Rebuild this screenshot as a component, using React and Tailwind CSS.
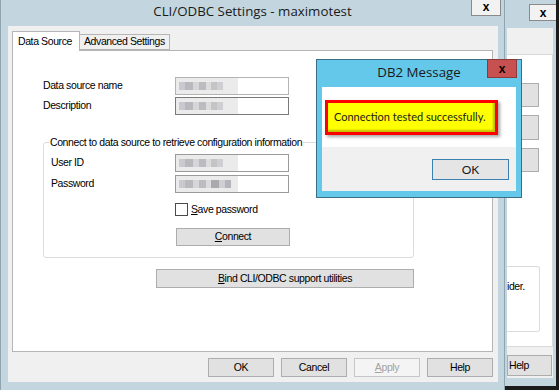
import React from "react";

const ui = { fontFamily: '"Liberation Sans", Arial, sans-serif', letterSpacing: "-0.4px" };
const seg = { fontFamily: '"Open Sans", "Noto Sans", sans-serif' };
const lato = { fontFamily: 'Lato, "Open Sans", sans-serif' };

function Blur({ dark }) {
  return (
    <div className="h-full w-[62px] bg-[#ebebeb] flex items-center pl-[3px] gap-0 blur-[0.6px]">
      <div className="h-[8px] w-[6px] bg-[#c9c9cf]" />
      <div className="h-[8px] w-[8px] bg-[#b9b9bd]" />
      <div className="h-[8px] w-[6px] bg-[#d6d6d8]" />
      <div className="h-[8px] w-[7px] bg-[#bcbcc0]" />
      <div className="h-[8px] w-[5px] bg-[#dcdcdc]" />
      <div className={dark ? "h-[8px] w-[8px] bg-[#a9a9b0]" : "h-[8px] w-[6px] bg-[#c4c4c4]"} />
      <div className="h-[8px] w-[6px] bg-[#cfcfd3]" />
      {dark && <div className="h-[8px] w-[6px] bg-[#b4b4ba]" />}
    </div>
  );
}

function TextBox({ border = "border-[#a8a8a8]", dark }) {
  return (
    <div className={`w-[114px] h-[18px] bg-white border ${border} flex items-stretch`}>
      <Blur dark={dark} />
    </div>
  );
}

function Btn({ children, className = "", disabled }) {
  return (
    <div
      className={`flex items-center justify-center whitespace-nowrap border ${
        disabled ? "border-[#c6c6c6] bg-[#f4f4f4] text-[#a3a3a3]" : "border-[#adadad] bg-[#e1e1e1] text-black"
      } text-[10.5px] ${className}`}
      style={ui}
    >
      {children}
    </div>
  );
}

const T = "text-[10.5px] text-black whitespace-nowrap";

export default function App() {
  return (
    <div className="relative w-[559px] h-[390px] overflow-hidden bg-[#1b1b1b]">
      {/* background window */}
      <div className="absolute left-[505px] top-0 w-[51px] h-[386px] bg-[#c3d6df] overflow-hidden flex flex-col">
        <div className="h-[28px] shrink-0 pt-[4px] pl-[24px]">
          <div className="w-[32px] h-[17px] bg-[#f2f2f2] border border-[#8a8a8a] flex items-center justify-center pr-[4px]">
            <span className="text-[12px] font-bold leading-none text-black" style={ui}>x</span>
          </div>
        </div>
        <div className="ml-[2px] w-[46px] h-[350px] bg-[#f0f0f0] flex flex-col">
          <div className="mt-[26px] h-[293px] bg-white border-y border-r border-[#d9d9d9] flex flex-col">
            <div className="mt-[28px] w-[32px] h-[24px] bg-[#e1e1e1] border border-[#adadad]" />
            <div className="mt-[8px] w-[32px] h-[25px] bg-[#e1e1e1] border border-[#adadad]" />
            <div className="mt-[8px] w-[32px] h-[24px] bg-[#e1e1e1] border border-[#adadad]" />
            <div className="mt-[94px] w-[33px] h-[66px] border border-[#dcdcdc] rounded-r-[3px] border-l-0 pt-[13px] flex flex-col text-[10.5px] leading-[12px]">
              <span className={T} style={ui}>ider.</span>
            </div>
          </div>
          <div className="mt-[8px] w-[45px] h-[21px] bg-[#e1e1e1] border border-[#adadad] flex items-center pl-[1px]">
            <span className={T} style={ui}>Help</span>
          </div>
        </div>
      </div>

      {/* main window */}
      <div className="absolute left-0 top-0 w-[505px] h-[390px] bg-[#c3d6df] border-l border-r border-[#8fa4ae] flex flex-col">
        <div className="relative h-[26px] shrink-0 flex items-center justify-center">
          <span className="text-[13.3px] text-[#1a1a1a] leading-none -mt-[2px] whitespace-nowrap" style={seg}>
            CLI/ODBC Settings - maximotest
          </span>
          <div className="absolute right-[3px] top-[-2px] w-[30px] h-[18px] bg-[#f2f2f2] border border-[#8a8a8a] flex items-center justify-center">
            <span className="text-[12px] font-bold leading-none text-black" style={ui}>x</span>
          </div>
        </div>
        <div className="ml-[7px] w-[490px] h-[356px] bg-[#f0f0f0] flex flex-col pl-[4px] pt-[5px]" style={ui}>
          {/* tabs */}
          <div className="flex items-end h-[19px] relative z-10">
            <div className="w-[68px] h-[20px] bg-white border border-[#b5b5b5] border-b-0 flex items-center pl-[5px] -mb-px">
              <span className={T}>Data Source</span>
            </div>
            <div className="w-[90px] h-[16px] bg-[#f0f0f0] border border-[#b5b5b5] border-l-0 flex items-center pl-[4px]">
              <span className={T}>Advanced Settings</span>
            </div>
          </div>
          {/* panel */}
          <div className="w-[481px] h-[302px] bg-white border border-[#b5b5b5] flex flex-col pl-[30px] pt-[26px]">
            <div className="flex items-center h-[18px]">
              <span className={`w-[132px] ${T}`}>Data source name</span>
              <TextBox border="border-[#b4b4b4]" />
            </div>
            <div className="flex items-center h-[18px] mt-[2px]">
              <span className={`w-[132px] ${T}`}>Description</span>
              <TextBox border="border-[#7a7a7a]" />
            </div>
            {/* group */}
            <div className="relative mt-[27px] w-[371px] h-[116px] border border-[#dcdcdc] rounded-[3px] flex flex-col pl-[7px] pt-[11px]">
              <span className={`absolute left-[5px] top-[-8px] bg-white px-[1px] leading-[14px] ${T}`}>
                Connect to data source to retrieve configuration information
              </span>
              <div className="flex items-center h-[18px]">
                <span className={`w-[124px] ${T}`}>User ID</span>
                <TextBox border="border-[#9a9a9a]" />
              </div>
              <div className="flex items-center h-[18px] mt-[3px]">
                <span className={`w-[124px] ${T}`}>Password</span>
                <TextBox border="border-[#9a9a9a]" dark />
              </div>
              <div className="flex items-center h-[13px] mt-[10px] ml-[124px]">
                <div className="w-[13px] h-[13px] bg-white border border-[#4a4a4a]" />
                <span className={`ml-[3px] ${T}`}>
                  <span className="underline">S</span>ave password
                </span>
              </div>
              <Btn className="mt-[12px] ml-[125px] w-[114px] h-[18px]">
                <span><span className="underline">C</span>onnect</span>
              </Btn>
            </div>
            <Btn className="mt-[11px] ml-[113px] w-[258px] h-[19px]">
              <span><span className="underline">B</span>ind CLI/ODBC support utilities</span>
            </Btn>
          </div>
          {/* bottom buttons */}
          <div className="flex justify-end gap-[7px] mt-[6px] pr-[5px]">
            <Btn className="w-[66px] h-[19px]">OK</Btn>
            <Btn className="w-[66px] h-[19px]">Cancel</Btn>
            <Btn className="w-[66px] h-[19px]" disabled>
              <span><span className="underline">A</span>pply</span>
            </Btn>
            <Btn className="w-[66px] h-[19px]">Help</Btn>
          </div>
        </div>
      </div>

      {/* DB2 Message dialog */}
      <div className="absolute left-[316px] top-[59px] w-[206px] h-[139px] bg-[#63c8ea] border border-[#3b6d84] flex flex-col">
        <div className="relative h-[27px] shrink-0 flex items-center justify-center">
          <span className="text-[13.3px] text-[#1a1a1a] leading-none -mt-[2px] whitespace-nowrap" style={seg}>DB2 Message</span>
          <div className="absolute right-[4px] top-[-1px] w-[30px] h-[19px] bg-[#c75050] border border-[#8e3a3a] flex items-center justify-center">
            <span className="text-[12px] font-bold leading-none text-black" style={ui}>x</span>
          </div>
        </div>
        <div className="ml-[5px] w-[194px] h-[104px] flex flex-col">
          <div className="h-[60px] bg-white pl-[3px] pt-[13px]">
            <div className="w-[173px] h-[35px] border-[3px] border-[#ff0000] bg-[#ffff00] shadow-[2px_2px_3px_rgba(0,0,0,0.35),inset_-2px_-2px_2px_rgba(0,0,0,0.25)] flex items-center pl-[6px]">
              <span className="text-[11px] text-[#1a1a1a] whitespace-nowrap" style={lato}>Connection tested successfully.</span>
            </div>
          </div>
          <div className="h-[44px] bg-[#f0f0f0] pl-[110px] pt-[12px]">
            <div className="w-[77px] h-[21px] border border-[#3c7fb1] bg-[#e5e5e5] flex items-center justify-center">
              <span className="text-[12px] text-[#1a1a1a]" style={lato}>OK</span>
            </div>
          </div>
        </div>
      </div>
    </div>
  );
}
